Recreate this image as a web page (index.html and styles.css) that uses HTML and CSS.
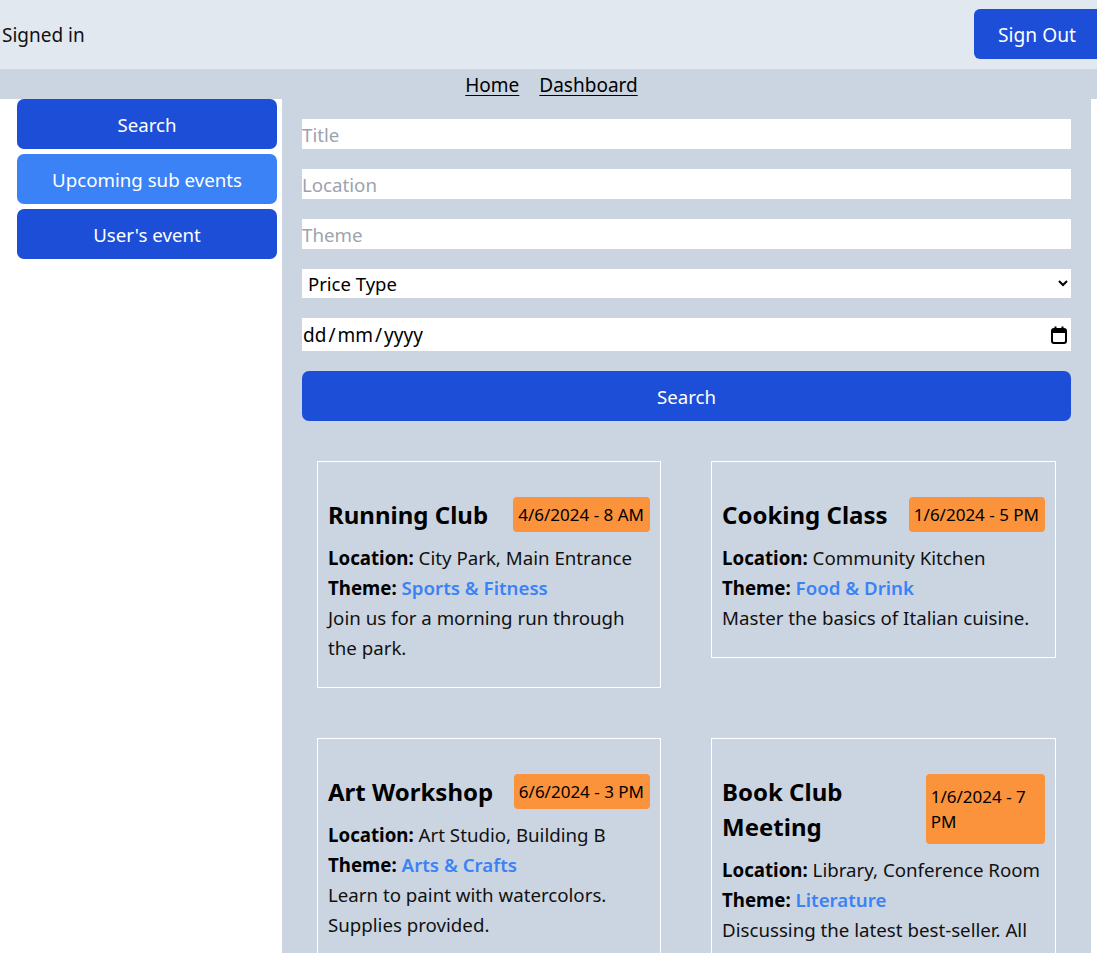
FILE: index.html
```html
<!DOCTYPE html>
<html lang="en">
<head>
<meta charset="utf-8">
<title>Events</title>
<link rel="stylesheet" href="styles.css">
</head>
<body>
<header class="topbar">
  <span class="signed">Signed in</span>
  <button class="signout">Sign Out</button>
</header>
<nav class="navbar">
  <a href="#" class="navlink">Home</a>
  <a href="#" class="navlink">Dashboard</a>
</nav>
<div class="layout">
  <aside class="sidebar">
    <button class="side-btn">Search</button>
    <button class="side-btn side-btn-active">Upcoming sub events</button>
    <button class="side-btn">User's event</button>
  </aside>
  <main class="main">
    <form class="search-form">
      <input class="field" type="text" placeholder="Title">
      <input class="field" type="text" placeholder="Location">
      <input class="field" type="text" placeholder="Theme">
      <select class="field field-select">
        <option>Price Type</option>
      </select>
      <label class="field field-date">
        <span class="date-text">dd<span class="sep">/</span>mm<span class="sep">/</span>yyyy</span>
        <svg class="cal-icon" width="16" height="18" viewBox="0 0 16 18" aria-hidden="true">
          <rect x="1" y="3" width="14" height="14" rx="2" fill="none" stroke="#000" stroke-width="2"/>
          <rect x="1" y="3" width="14" height="4" fill="#000"/>
          <rect x="3.5" y="0.5" width="2" height="3.5" fill="#000"/>
          <rect x="10.5" y="0.5" width="2" height="3.5" fill="#000"/>
        </svg>
      </label>
      <button type="button" class="search-btn">Search</button>
    </form>
    <section class="cards">
      <article class="card">
        <div class="card-head">
          <h2 class="card-title">Running Club</h2>
          <span class="badge">4/6/2024 - 8 AM</span>
        </div>
        <p class="line"><b>Location:</b> City Park, Main Entrance</p>
        <p class="line"><b>Theme:</b> <span class="theme">Sports &amp; Fitness</span></p>
        <p class="line">Join us for a morning run through the park.</p>
      </article>
      <article class="card">
        <div class="card-head">
          <h2 class="card-title">Cooking Class</h2>
          <span class="badge">1/6/2024 - 5 PM</span>
        </div>
        <p class="line"><b>Location:</b> Community Kitchen</p>
        <p class="line"><b>Theme:</b> <span class="theme">Food &amp; Drink</span></p>
        <p class="line">Master the basics of Italian cuisine.</p>
      </article>
      <article class="card">
        <div class="card-head">
          <h2 class="card-title">Art Workshop</h2>
          <span class="badge">6/6/2024 - 3 PM</span>
        </div>
        <p class="line"><b>Location:</b> Art Studio, Building B</p>
        <p class="line"><b>Theme:</b> <span class="theme">Arts &amp; Crafts</span></p>
        <p class="line">Learn to paint with watercolors. Supplies provided.</p>
      </article>
      <article class="card">
        <div class="card-head">
          <h2 class="card-title">Book Club Meeting</h2>
          <span class="badge">1/6/2024 - 7 PM</span>
        </div>
        <p class="line"><b>Location:</b> Library, Conference Room</p>
        <p class="line"><b>Theme:</b> <span class="theme">Literature</span></p>
        <p class="line">Discussing the latest best-seller. All are welcome.</p>
      </article>
    </section>
  </main>
</div>
</body>
</html>
```
FILE: styles.css
```css
* { box-sizing: border-box; }
html, body { margin: 0; padding: 0; }
body {
  font-family: "Noto Sans", "Open Sans", sans-serif;
  color: #000;
  background: #fff;
  overflow-x: hidden;
}
.topbar {
  height: 69px;
  background: #e2e8f0;
  display: flex;
  align-items: flex-start;
  justify-content: space-between;
  padding-left: 2px;
}
.signed { font-size: 19px; color: #111; line-height: 69px; padding-top: 1px; }
.signout {
  margin-top: 9px;
  width: 123px;
  height: 50px;
  border: none;
  border-radius: 6px 0 0 6px;
  background: #1d4ed8;
  color: #fff;
  font-family: inherit;
  font-size: 19.2px;
  padding: 0 0 0 3px;
}
.navbar {
  height: 30px;
  background: #cbd5e1;
  display: flex;
  justify-content: center;
  align-items: center;
  gap: 20px;
  padding-left: 6px;
  padding-top: 2px;
}
.navlink { color: #000; font-size: 19px; text-decoration: underline; text-underline-offset: 3px; }
.layout { display: flex; align-items: stretch; min-height: 854px; }
.sidebar {
  flex: 0 0 282px;
  padding: 0 5px 0 17px;
  display: flex;
  flex-direction: column;
  gap: 5px;
}
.side-btn {
  height: 50px;
  border: none;
  border-radius: 7px;
  background: #1d4ed8;
  color: #fff;
  font-family: inherit;
  font-size: 18.7px;
  padding-top: 2px;
}
.side-btn-active { background: #3b82f6; }
.main {
  flex: 0 0 809px;
  background: #cbd5e1;
  padding: 20px 20px 40px;
}
.search-form { display: flex; flex-direction: column; gap: 20px; }
.field {
  height: 30px;
  border: none;
  padding: 0;
  background: #fff;
  font-family: inherit;
  font-size: 18.7px;
  color: #000;
  outline: none;
}
.field::placeholder { color: #9ca3af; }
.field-select { height: 29px; padding-left: 2px; appearance: auto; border-radius: 0; font-size: 18.5px; }
.field-date {
  height: 33px;
  display: flex;
  align-items: center;
  justify-content: space-between;
  padding: 0 4px 0 1px;
}
.date-text { font-size: 19px; }
.sep { padding: 0 2px; }
.cal-icon { display: block; }
.search-btn {
  height: 50px;
  border: none;
  border-radius: 7px;
  background: #1d4ed8;
  color: #fff;
  font-family: inherit;
  font-size: 18.7px;
  padding-top: 2px;
}
.cards {
  margin-top: 40px;
  padding: 0 15px;
  display: grid;
  grid-template-columns: 344px 345px;
  justify-content: space-between;
  row-gap: 50px;
  align-items: start;
}
.card {
  border: 1px solid #fff;
  padding: 10px 10px 24px;
}
.card-head {
  display: flex;
  justify-content: space-between;
  align-items: stretch;
  gap: 8px;
  margin: 25px 0 11px;
}
.card-title {
  margin: 0;
  font-size: 24px;
  line-height: 35px;
  font-weight: 700;
}
.badge {
  display: flex;
  align-items: center;
  background: #fb923c;
  border-radius: 4px;
  padding: 5px 6px 5px 5px;
  font-size: 17px;
  line-height: 25px;
}
.line {
  margin: 0;
  font-size: 18.7px;
  line-height: 30px;
  color: #111;
}
.line b { color: #000; }
.theme { color: #3b82f6; font-weight: 600; }
```
